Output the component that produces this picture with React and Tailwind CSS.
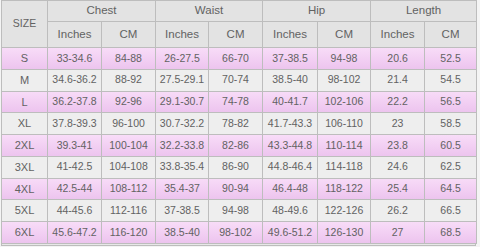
import React from 'react';

const rows = [
  ['S', '33-34.6', '84-88', '26-27.5', '66-70', '37-38.5', '94-98', '20.6', '52.5'],
  ['M', '34.6-36.2', '88-92', '27.5-29.1', '70-74', '38.5-40', '98-102', '21.4', '54.5'],
  ['L', '36.2-37.8', '92-96', '29.1-30.7', '74-78', '40-41.7', '102-106', '22.2', '56.5'],
  ['XL', '37.8-39.3', '96-100', '30.7-32.2', '78-82', '41.7-43.3', '106-110', '23', '58.5'],
  ['2XL', '39.3-41', '100-104', '32.2-33.8', '82-86', '43.3-44.8', '110-114', '23.8', '60.5'],
  ['3XL', '41-42.5', '104-108', '33.8-35.4', '86-90', '44.8-46.4', '114-118', '24.6', '62.5'],
  ['4XL', '42.5-44', '108-112', '35.4-37', '90-94', '46.4-48', '118-122', '25.4', '64.5'],
  ['5XL', '44-45.6', '112-116', '37-38.5', '94-98', '48-49.6', '122-126', '26.2', '66.5'],
  ['6XL', '45.6-47.2', '116-120', '38.5-40', '98-102', '49.6-51.2', '126-130', '27', '68.5'],
];

const widths = ['w-[46px]', 'w-[54px]', 'w-[54px]', 'w-[53px]', 'w-[54px]', 'w-[55px]', 'w-[53px]', 'w-[54px]', 'w-[52px]'];

const cell = 'border border-[#bdbdbd] text-center p-0';

export default function App() {
  return (
    <div className="w-[480px] h-[247px] bg-[#f4f4f4] overflow-hidden font-['Liberation_Sans',Arial,sans-serif] text-[#626262]">
      <div className="pl-px">
        <table className="border-collapse table-fixed w-[475px]">
          <colgroup>
            {widths.map((w, i) => (
              <col key={i} className={w} />
            ))}
          </colgroup>
          <thead className="bg-[#e3e3e3] text-[11.5px]">
            <tr className="h-[21px]">
              <th rowSpan={2} className={`${cell} font-normal text-[10.5px]`}>SIZE</th>
              <th colSpan={2} className={`${cell} font-normal`}>Chest</th>
              <th colSpan={2} className={`${cell} font-normal`}>Waist</th>
              <th colSpan={2} className={`${cell} font-normal`}>Hip</th>
              <th colSpan={2} className={`${cell} font-normal`}>Length</th>
            </tr>
            <tr className="h-[26px]">
              {['Inches', 'CM', 'Inches', 'CM', 'Inches', 'CM', 'Inches', 'CM'].map((t, i) => (
                <th key={i} className={`${cell} font-normal`}>{t}</th>
              ))}
            </tr>
          </thead>
          <tbody className="text-[10.5px]">
            {rows.map((r, i) => (
              <tr
                key={r[0]}
                className={`h-[21.75px] ${i % 2 === 0 ? 'bg-gradient-to-b from-[#f8dcf8] to-[#ecc3ee]' : 'bg-[#eeeeee]'}`}
              >
                {r.map((v, j) => (
                  <td key={j} className={`${cell} ${j === 0 ? 'text-[11px]' : ''}`}>{v}</td>
                ))}
              </tr>
            ))}
          </tbody>
        </table>
        <div className="w-[475px] h-[2px] border-x border-b border-[#bdbdbd] bg-[#e8e8e8]" />
      </div>
    </div>
  );
}
